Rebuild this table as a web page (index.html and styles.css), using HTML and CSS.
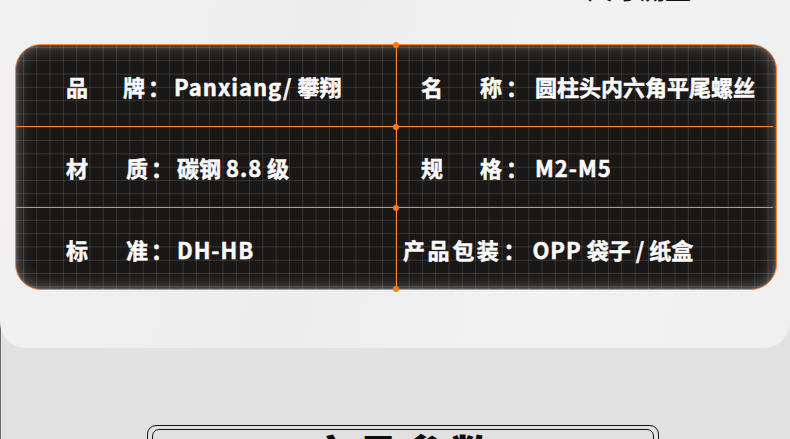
FILE: index.html
```html
<!DOCTYPE html>
<html lang="zh-CN">
<head>
<meta charset="utf-8">
<title>产品参数</title>
<link rel="stylesheet" href="styles.css">
</head>
<body>
<div class="page">
  <section class="panel">
    <div class="clip-title"><span>尺寸测量</span></div>
    <div class="card">
      <div class="cell left row-a">
        <span class="k">品</span><span class="k k2">牌</span><span class="colon">：</span><span class="v"><span class="lat">Panxiang/</span> 攀翔</span>
      </div>
      <div class="cell right row-a">
        <span class="k">名</span><span class="k k2">称</span><span class="colon">：</span><span class="v">圆柱头内六角平尾螺丝</span>
      </div>
      <div class="cell left row-b">
        <span class="k">材</span><span class="k k2 k2b">质</span><span class="colon">：</span><span class="v">碳钢 <span class="lat">8.8</span> 级</span>
      </div>
      <div class="cell right row-b">
        <span class="k">规</span><span class="k k2">格</span><span class="colon">：</span><span class="v"><span class="lat">M2-M5</span></span>
      </div>
      <div class="cell left row-c">
        <span class="k">标</span><span class="k k2 k2b">准</span><span class="colon">：</span><span class="v"><span class="lat">DH-HB</span></span>
      </div>
      <div class="cell right row-c wide">
        <span class="k long">产品包装</span><span class="colon">：</span><span class="v"><span class="lat">OPP</span> 袋子 / 纸盒</span>
      </div>
      <i class="dot d1"></i><i class="dot d2"></i><i class="dot d3"></i><i class="dot d4"></i>
    </div>
  </section>
  <section class="lower">
    <div class="frame">
      <div class="frame-inner">
        <h2 class="frame-title">产品参数</h2>
      </div>
    </div>
  </section>
</div>
</body>
</html>
```

FILE: styles.css
```css
* { box-sizing: border-box; }
html, body { margin: 0; padding: 0; }
body {
  width: 790px;
  height: 439px;
  overflow: hidden;
  background: #e1e1e1;
  box-shadow: inset 1px 0 0 #6d6d6d;
  font-family: "Noto Sans CJK SC", "Noto Sans", sans-serif;
}
.page { width: 790px; }

.panel {
  position: relative;
  z-index: 1;
  height: 348px;
  background: linear-gradient(100deg, #f1f1f1 0%, #ededed 40%, #f2f2f2 70%, #efefef 100%);
  border-radius: 0 0 26px 26px;
  padding: 0 13px 0 15px;
}

.clip-title {
  height: 3px;
  overflow: hidden;
  padding-right: 86px;
}
.clip-title span {
  display: block;
  margin-top: -26px;
  text-align: right;
  font-size: 26px;
  line-height: 28px;
  font-weight: 700;
  color: #111;
}

.card {
  position: relative;
  margin-top: 41px;
  width: 762px;
  height: 246px;
  border: 1px solid #f7863a;
  border-radius: 26px;
  background-color: #1a1717;
  background-image:
    linear-gradient(to right, rgba(120,114,114,0.32) 1px, transparent 1px),
    linear-gradient(to bottom, rgba(120,114,114,0.32) 1px, transparent 1px);
  background-size: 13.3px 13.3px;
  background-position: 7px 2px;
  box-shadow: inset 0 0 16px 1px rgba(255,255,255,0.32), inset 0 0 3px rgba(255,255,255,0.3);
  display: grid;
  grid-template-columns: 381px 1fr;
  grid-template-rows: 82px 81px 1fr;
  color: #fafafa;
  font-size: 22px;
  font-weight: 700;
  -webkit-text-stroke: 0.5px #fafafa;
}

.cell {
  display: flex;
  align-items: center;
  white-space: nowrap;
  line-height: 1;
}
.cell.left { border-right: 1px solid #f7863a; padding-left: 50px; }
.cell.right { padding-left: 24px; margin-right: 3px; }
.row-a, .row-b { border-bottom: 1px solid #f7863a; }

.k { display: inline-block; width: 22px; }
.left .k2 { margin-left: 35px; }
.left .k2b { margin-left: 38px; }
.right .k2 { margin-left: 37px; }

.colon { display: inline-block; width: 22px; text-align: center; }
.left .colon { margin-left: 3px; }
.right .colon { margin-left: 4px; }
.left .v { margin-left: 4px; }
.right .v { margin-left: 7px; }
.lat { letter-spacing: 1px; }

.right.wide { padding-left: 6px; }
.k.long { width: auto; letter-spacing: 2.6px; margin-right: -2px; }

.dot {
  position: absolute;
  width: 6px;
  height: 6px;
  border-radius: 50%;
  background: #ff7a1e;
  left: 377px;
}
.d1 { top: -3px; }
.d2 { top: 79px; }
.d3 { top: 160px; }
.d4 { top: 241px; }

.lower { padding: 77px 0 0 147px; }
.frame {
  width: 512px;
  height: 120px;
  border: 1px solid #151515;
  border-radius: 9px 9px 0 0;
  padding: 3px 4px 0;
}
.frame-inner {
  height: 100%;
  border: 1px solid #151515;
  border-radius: 7px 7px 0 0;
  padding-top: 2px;
}
.frame-title {
  margin: 0;
  text-align: center;
  font-size: 44px;
  line-height: 1;
  letter-spacing: 3px;
  font-weight: 900;
  color: #0c0c0c;
}
```
